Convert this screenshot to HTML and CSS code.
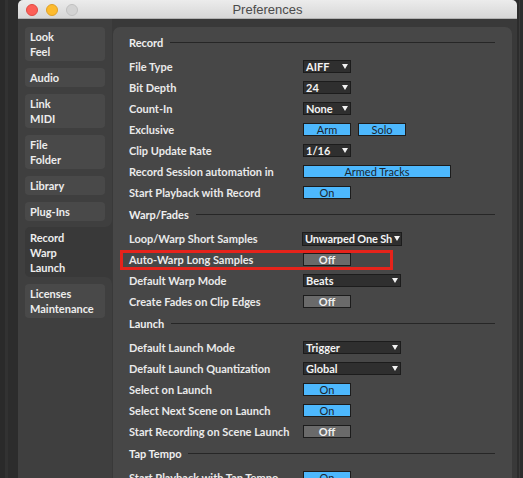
FILE: index.html
```html
<!DOCTYPE html>
<html>
<head>
<meta charset="utf-8">
<link rel="stylesheet" href="styles.css">
</head>
<body>
<div class="screen">
  <div class="edge-left"></div>
  <div class="window">
    <div class="titlebar">
      <div class="lights">
        <span class="light red"></span>
        <span class="light yellow"></span>
        <span class="light gray"></span>
      </div>
      <div class="title">Preferences</div>
      <div></div>
    </div>
    <div class="winbody">
      <div class="sidebar">
        <div class="group group-top">
          <div class="tab">Look<br>Feel</div>
          <div class="tab">Audio</div>
          <div class="tab">Link<br>MIDI</div>
          <div class="tab">File<br>Folder</div>
          <div class="tab">Library</div>
          <div class="tab">Plug-Ins</div>
        </div>
        <div class="sel-row">
          <div class="tab selected">Record<br>Warp<br>Launch</div>
        </div>
        <div class="group group-bottom">
          <div class="tab">Licenses<br>Maintenance</div>
        </div>
      </div>
      <div class="panel">
        <div class="header"><span>Record</span></div>
        <div class="row"><span class="label">File Type</span><span class="dd">AIFF</span></div>
        <div class="row"><span class="label">Bit Depth</span><span class="dd">24</span></div>
        <div class="row"><span class="label">Count-In</span><span class="dd">None</span></div>
        <div class="row"><span class="label">Exclusive</span><span class="btn on">Arm</span><span class="btn on second">Solo</span></div>
        <div class="row"><span class="label">Clip Update Rate</span><span class="dd">1/16</span></div>
        <div class="row"><span class="label">Record Session automation in</span><span class="btn on wide">Armed Tracks</span></div>
        <div class="row"><span class="label">Start Playback with Record</span><span class="btn on">On</span></div>

        <div class="header"><span>Warp/Fades</span></div>
        <div class="row"><span class="label">Loop/Warp Short Samples</span><span class="dd w100 shift"><span class="ddtext">Unwarped One Sh</span></span></div>
        <div class="row marked"><span class="label">Auto-Warp Long Samples</span><span class="btn off">Off</span><span class="mark"></span></div>
        <div class="row"><span class="label">Default Warp Mode</span><span class="dd w98">Beats</span></div>
        <div class="row"><span class="label">Create Fades on Clip Edges</span><span class="btn off">Off</span></div>

        <div class="header"><span>Launch</span></div>
        <div class="row"><span class="label">Default Launch Mode</span><span class="dd w98">Trigger</span></div>
        <div class="row"><span class="label">Default Launch Quantization</span><span class="dd w98">Global</span></div>
        <div class="row"><span class="label">Select on Launch</span><span class="btn on">On</span></div>
        <div class="row"><span class="label">Select Next Scene on Launch</span><span class="btn on">On</span></div>
        <div class="row"><span class="label">Start Recording on Scene Launch</span><span class="btn off">Off</span></div>

        <div class="header"><span>Tap Tempo</span></div>
        <div class="row"><span class="label">Start Playback with Tap Tempo</span><span class="btn on">On</span></div>
      </div>
    </div>
  </div>
  <div class="edge-right"></div>
</div>
</body>
</html>
```
FILE: styles.css
```css
html, body {
  margin: 0;
  padding: 0;
  background: #2b2b2b;
}
.screen {
  display: flex;
  width: 523px;
  height: 478px;
  overflow: hidden;
  background: #2b2b2b;
  font-family: "Lato", "Noto Sans", sans-serif;
}
.edge-left {
  width: 18px;
  flex: none;
  background: linear-gradient(to right, #2a2a2a 0 5px, #323232 5px 8px, #2c2c2c 8px);
}
.edge-right {
  flex: 1;
  background: linear-gradient(to right, #2c2c2c 0 2px, #3a3a3a 2px 3px, #2c2c2c 3px);
}
.window {
  width: 499px;
  flex: none;
  display: flex;
  flex-direction: column;
  background: #393939;
  border-radius: 5px 5px 0 0;
  overflow: hidden;
}
.titlebar {
  height: 18px;
  flex: none;
  border-bottom: 1px solid #b2b2b2;
  background: linear-gradient(#ececec, #d7d7d7);
  display: grid;
  grid-template-columns: 1fr auto 1fr;
  align-items: center;
}
.lights {
  display: flex;
  gap: 8px;
  padding-left: 8px;
}
.light {
  width: 12px;
  height: 12px;
  border-radius: 50%;
  box-sizing: border-box;
}
.red { background: #fc5f57; border: 1px solid #df4a43; }
.yellow { background: #fdbb2e; border: 1px solid #dfa027; }
.gray { background: #d3d3d3; border: 1px solid #c0c0c0; }
.title {
  font-family: "Liberation Sans", Arial, sans-serif;
  font-size: 13px;
  color: #4b4b4b;
  line-height: 18px;
  padding-top: 1px;
}
.winbody {
  flex: 1;
  display: flex;
  min-height: 0;
}
.sidebar {
  width: 94px;
  flex: none;
  display: flex;
  flex-direction: column;
  background: #393939;
}
.group {
  background: #3f3f3f;
  display: flex;
  flex-direction: column;
  gap: 7px;
  padding: 8px 7px 6px;
}
.group-top {
  border-bottom-right-radius: 7px;
}
.group-bottom {
  flex: 1;
  padding-top: 7px;
  border-top-right-radius: 7px;
}
.sel-row {
  padding-left: 7px;
  background: linear-gradient(to right, #3f3f3f 0 13px, transparent 13px);
}
.tab {
  background: #494949;
  border-radius: 4px;
  padding: 2px 5px;
  line-height: 15px;
  font-size: 11px;
  font-weight: 700;
  color: #ededed;
}
.tab.selected {
  background: #393939;
  border-radius: 5px 0 0 5px;
  padding: 3px 5px 2px;
}
.panel {
  flex: 1;
  margin: 8px 5px 0 1px;
  background: #474747;
  border-radius: 7px 7px 0 0;
  padding: 4px 17px 0 16px;
  color: #eaeaea;
  font-size: 11px;
  font-weight: 700;
}
.header {
  height: 23px;
  margin-bottom: 2px;
  display: flex;
  align-items: center;
  gap: 7px;
  color: #efefef;
}
.header::after {
  content: "";
  flex: 1;
  height: 1px;
  background: #262626;
}
.row {
  height: 21px;
  display: flex;
  align-items: center;
  position: relative;
}
.label {
  width: 174px;
  flex: none;
  white-space: nowrap;
}
.dd {
  width: 48px;
  height: 13px;
  box-sizing: border-box;
  border: 1px solid #1c1c1c;
  background: #2f2f2f;
  color: #f3f3f3;
  display: flex;
  align-items: center;
  padding-left: 2px;
  padding-right: 2px;
  line-height: 11px;
  white-space: nowrap;
}
.dd::after {
  content: "";
  margin-left: auto;
  flex: none;
  width: 0;
  height: 0;
  border-left: 3.5px solid transparent;
  border-right: 3.5px solid transparent;
  border-top: 5px solid #f3f3f3;
}
.w98 { width: 98px; }
.w100 { width: 100px; height: 14px; padding-right: 1px; }
.shift { margin-left: -1px; }
.ddtext {
  overflow: hidden;
  flex: 1;
  min-width: 0;
  letter-spacing: -0.15px;
}
.btn {
  width: 48px;
  height: 13px;
  box-sizing: border-box;
  border: 1px solid #1c1c1c;
  text-align: center;
  line-height: 11px;
  font-weight: 400;
}
.btn.wide { width: 148px; }
.btn.second { margin-left: 7px; }
.on {
  background: #4db8fd;
  color: #1b2630;
}
.off {
  background: #6a6a6a;
  color: #f0f0f0;
  font-weight: 700;
}
.mark {
  position: absolute;
  left: -9px;
  top: 1px;
  width: 273px;
  height: 20px;
  box-sizing: border-box;
  border: 3px solid #e6231b;
}
```
